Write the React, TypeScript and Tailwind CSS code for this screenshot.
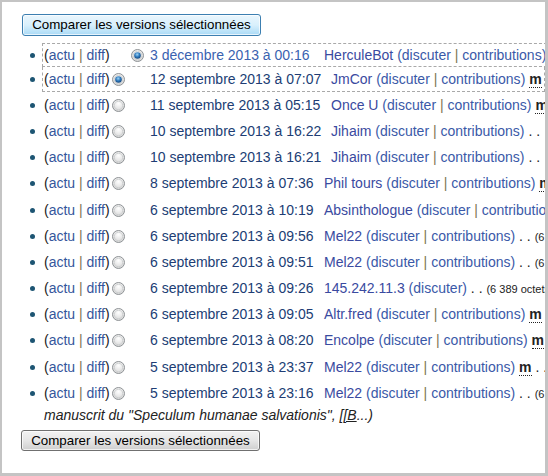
import React from "react";

type Row = {
  date: string;
  user: string;
  ip?: boolean;
  tail: React.ReactNode;
  h?: number;
};

const Sep = () => <span className="text-[#7d7650]">|</span>;

const Minor = () => (
  <span className="font-bold text-[#222] border-b border-dotted border-[#222]">m</span>
);

const Dots = () => <span className="text-[#222]">. .</span>;

const Bytes = ({ t }: { t: string }) => <span className="text-[11px] text-[#222]">{t}</span>;

function Radio({ checked, visible = true }: { checked?: boolean; visible?: boolean }) {
  return (
    <span className={`inline-flex w-[13px] h-[13px] shrink-0 ${visible ? "" : "invisible"}`}>
      <svg width="13" height="13" viewBox="0 0 13 13">
        <defs>
          <radialGradient id="rg" cx="50%" cy="35%" r="60%">
            <stop offset="0%" stopColor="#ffffff" />
            <stop offset="100%" stopColor="#d8d8d8" />
          </radialGradient>
          <radialGradient id="dot" cx="45%" cy="35%" r="60%">
            <stop offset="0%" stopColor="#9cd3f5" />
            <stop offset="60%" stopColor="#2c77bb" />
            <stop offset="100%" stopColor="#1b4f86" />
          </radialGradient>
        </defs>
        <circle cx="6.5" cy="6.5" r="6" fill="url(#rg)" stroke="#8f9396" strokeWidth="1" />
        <circle cx="6.5" cy="6.5" r="4.2" fill="none" stroke="#c9cbcd" strokeWidth="0.8" />
        {checked && <circle cx="6.5" cy="6.5" r="3.3" fill="url(#dot)" />}
      </svg>
    </span>
  );
}

const rows: Row[] = [
  { date: "3 décembre 2013 à 00:16", user: "HerculeBot", tail: null },
  { date: "12 septembre 2013 à 07:07", user: "JmCor", tail: <> <Minor /></> },
  { date: "11 septembre 2013 à 05:15", user: "Once U", tail: <> <Minor /></> },
  { date: "10 septembre 2013 à 16:22", user: "Jihaim", tail: <> <Dots /></> },
  { date: "10 septembre 2013 à 16:21", user: "Jihaim", tail: <> <Dots /></> },
  { date: "8 septembre 2013 à 07:36", user: "Phil tours", tail: <> <Minor /></>, h: 27 },
  { date: "6 septembre 2013 à 10:19", user: "Absinthologue", tail: null },
  { date: "6 septembre 2013 à 09:56", user: "Mel22", tail: <> <Dots /> <Bytes t="(6 389 octets)" /></> },
  { date: "6 septembre 2013 à 09:51", user: "Mel22", tail: <> <Dots /> <Bytes t="(6 389 octets)" /></> },
  { date: "6 septembre 2013 à 09:26", user: "145.242.11.3", ip: true, tail: <> <Dots /> <Bytes t="(6 389 octets)" /></> },
  { date: "6 septembre 2013 à 09:05", user: "Altr.fred", tail: <> <Minor /></> },
  { date: "6 septembre 2013 à 08:20", user: "Encolpe", tail: <> <Minor /></>, h: 27 },
  { date: "5 septembre 2013 à 23:37", user: "Mel22", tail: <> <Minor /> <Dots /></> },
  { date: "5 septembre 2013 à 23:16", user: "Mel22", tail: <> <Dots /> <Bytes t="(6 389 octets)" /></> },
];

export default function App() {
  return (
    <div className="w-[548px] h-[476px] bg-white border-l-2 border-t-2 border-r-[3px] border-b-[3px] border-[#c4c4c4] overflow-hidden font-['Liberation_Sans',Arial,sans-serif] text-[14px] text-[#222]">
      <div className="pl-[20px] pt-[12px]">
        <button className="h-[22px] w-[239px] rounded-[3px] border border-[#3c7fb1] bg-gradient-to-b from-[#eaf6fd] via-[#d9f0fc] to-[#a9daf6] text-[13.33px] text-black leading-none shadow-[inset_0_0_0_1px_rgba(255,255,255,0.7)]">
          Comparer les versions sélectionnées
        </button>
      </div>
      <ul className="mt-[7px]">
        {rows.map((r, i) => {
          const first = i === 0;
          const second = i === 1;
          const boxH = first ? 24 : second ? 25 : r.h ?? 26;
          const boxCls = first
            ? "border border-dashed border-[#a9a9a9]"
            : second
            ? "border-x border-b border-dashed border-[#a9a9a9]"
            : "border-x border-transparent";
          const twoDigit = /^\d\d /.test(r.date);
          return (
            <li key={i} className="flex items-start whitespace-nowrap">
              <span className="w-[28px] shrink-0" />
              <span className="flex items-center" style={{ height: boxH }}>
                <span className="w-[5px] h-[5px] rounded-full bg-[#1d5573] shrink-0" />
              </span>
              <span className="w-[7px] shrink-0" />
              <div className={`flex items-center grow pl-[1px] ${boxCls}`} style={{ height: boxH }}>
                <span className="inline-block w-[68px] shrink-0">
                  (<span className="text-[#35569c]">actu</span> <Sep />{" "}
                  <span className="text-[#35569c]">diff</span>)
                </span>
                <Radio checked={second} visible={!first} />
                <span className="w-[6px] shrink-0" />
                <Radio checked={first} visible={first} />
                <span className="w-[6px] shrink-0" />
                <span
                  className={`inline-block shrink-0 ${twoDigit ? "w-[181px]" : "w-[174px]"} ${
                    first ? "text-[#3a62b0]" : "text-[#203d74]"
                  }`}
                >
                  {r.date}
                </span>
                <span>
                  <span className="text-[#3a4aa0]">{r.user}</span>{" "}
                  <span className="text-[#3a59a8]">
                    (discuter
                    {r.ip ? null : (
                      <>
                        {" "}
                        <Sep /> contributions
                      </>
                    )}
                    )
                  </span>
                  {r.tail}
                </span>
              </div>
            </li>
          );
        })}
      </ul>
      <div className="pl-[42px] h-[18px] leading-[18px] italic text-[#222] whitespace-nowrap">
        manuscrit du "Speculum humanae salvationis", <span className="underline">[[B</span>...)
      </div>
      <div className="pl-[19px] mt-[6px]">
        <button className="h-[21px] w-[239px] rounded-[3px] border border-[#707070] bg-gradient-to-b from-[#f2f2f2] via-[#e6e6e6] to-[#cfcfcf] text-[13.33px] text-black leading-none shadow-[inset_0_0_0_1px_rgba(255,255,255,0.7)]">
          Comparer les versions sélectionnées
        </button>
      </div>
    </div>
  );
}
